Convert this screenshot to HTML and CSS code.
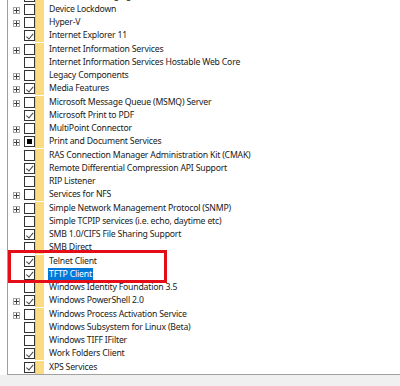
FILE: index.html
```html
<!DOCTYPE html>
<html lang="en">
   <head>
      <meta charset="UTF-8">
      <title>Windows Features</title>
      <link rel="stylesheet" href="styles.css">
   </head>
   <body>
      <div class="tree">
         <div class="list">
            <div class="row"><span class="exp blank"></span><span class="box"></span><span class="folder"></span><span class="label">Data Center Bridging</span></div>
            <div class="row"><span class="exp"></span><span class="box"></span><span class="folder"></span><span class="label">Device Lockdown</span></div>
            <div class="row"><span class="exp"></span><span class="box"></span><span class="folder"></span><span class="label">Hyper-V</span></div>
            <div class="row"><span class="exp blank"></span><span class="box on"></span><span class="folder"></span><span class="label">Internet Explorer 11</span></div>
            <div class="row"><span class="exp"></span><span class="box"></span><span class="folder"></span><span class="label">Internet Information Services</span></div>
            <div class="row"><span class="exp blank"></span><span class="box"></span><span class="folder"></span><span class="label">Internet Information Services Hostable Web Core</span></div>
            <div class="row"><span class="exp"></span><span class="box"></span><span class="folder"></span><span class="label">Legacy Components</span></div>
            <div class="row"><span class="exp"></span><span class="box on"></span><span class="folder"></span><span class="label">Media Features</span></div>
            <div class="row"><span class="exp"></span><span class="box"></span><span class="folder"></span><span class="label">Microsoft Message Queue (MSMQ) Server</span></div>
            <div class="row"><span class="exp blank"></span><span class="box on"></span><span class="folder"></span><span class="label">Microsoft Print to PDF</span></div>
            <div class="row"><span class="exp"></span><span class="box"></span><span class="folder"></span><span class="label">MultiPoint Connector</span></div>
            <div class="row"><span class="exp"></span><span class="box mixed"></span><span class="folder"></span><span class="label">Print and Document Services</span></div>
            <div class="row"><span class="exp blank"></span><span class="box"></span><span class="folder"></span><span class="label">RAS Connection Manager Administration Kit (CMAK)</span></div>
            <div class="row"><span class="exp blank"></span><span class="box on"></span><span class="folder"></span><span class="label">Remote Differential Compression API Support</span></div>
            <div class="row"><span class="exp blank"></span><span class="box"></span><span class="folder"></span><span class="label">RIP Listener</span></div>
            <div class="row"><span class="exp"></span><span class="box"></span><span class="folder"></span><span class="label">Services for NFS</span></div>
            <div class="row"><span class="exp"></span><span class="box"></span><span class="folder"></span><span class="label">Simple Network Management Protocol (SNMP)</span></div>
            <div class="row"><span class="exp blank"></span><span class="box"></span><span class="folder"></span><span class="label">Simple TCPIP services (i.e. echo, daytime etc)</span></div>
            <div class="row"><span class="exp blank"></span><span class="box on"></span><span class="folder"></span><span class="label">SMB 1.0/CIFS File Sharing Support</span></div>
            <div class="row"><span class="exp blank"></span><span class="box"></span><span class="folder"></span><span class="label">SMB Direct</span></div>
            <div class="row"><span class="exp blank"></span><span class="box on"></span><span class="folder"></span><span class="label">Telnet Client</span></div>
            <div class="row"><span class="exp blank"></span><span class="box on"></span><span class="folder"></span><span class="label selected">TFTP Client</span></div>
            <div class="row"><span class="exp blank"></span><span class="box"></span><span class="folder"></span><span class="label">Windows Identity Foundation 3.5</span></div>
            <div class="row"><span class="exp"></span><span class="box on"></span><span class="folder"></span><span class="label">Windows PowerShell 2.0</span></div>
            <div class="row"><span class="exp"></span><span class="box"></span><span class="folder"></span><span class="label">Windows Process Activation Service</span></div>
            <div class="row"><span class="exp blank"></span><span class="box"></span><span class="folder"></span><span class="label">Windows Subsystem for Linux (Beta)</span></div>
            <div class="row"><span class="exp blank"></span><span class="box"></span><span class="folder"></span><span class="label">Windows TIFF IFilter</span></div>
            <div class="row"><span class="exp blank"></span><span class="box on"></span><span class="folder"></span><span class="label">Work Folders Client</span></div>
            <div class="row"><span class="exp blank"></span><span class="box on"></span><span class="folder"></span><span class="label">XPS Services</span></div>
         </div>
      </div>
      <div class="footer"></div>
      <div class="callout"></div>
   </body>
</html>
```

FILE: styles.css
```css
html, body {
margin: 0;
padding: 0;
}
body {
width: 400px;
height: 386px;
overflow: hidden;
position: relative;
background-color: #fff;
font-family: "Noto Sans", "Open Sans", Arial, sans-serif;
font-size: 8.7px;
letter-spacing: -0.2px;
color: #1a1a1a;
}
.tree {
margin-left: 7px;
height: 374px;
background-color: #fff;
border-left: 1px solid #a0a0a0;
border-bottom: 1px solid #a0a0a0;
overflow: hidden;
}
.footer {
height: 11px;
background-color: #f0f0f0;
}
.list {
margin-top: -10.4px;
}
.row {
height: 13.26px;
display: flex;
align-items: center;
padding-left: 5px;
white-space: nowrap;
}
.exp {
position: relative;
width: 5px;
height: 5px;
border: 1px solid #a6a6a6;
margin-right: 4px;
margin-top: 2px;
flex: none;
}
.exp::before, .exp::after {
content: "";
position: absolute;
background-color: #404040;
}
.exp::before {
left: 0;
top: 2px;
width: 5px;
height: 1px;
}
.exp::after {
left: 2px;
top: 0;
width: 1px;
height: 5px;
}
.exp.blank {
visibility: hidden;
}
.box {
position: relative;
width: 9px;
height: 9px;
border: 1px solid #333;
background-color: #fff;
flex: none;
}
.box.on::after {
content: "";
position: absolute;
left: 3px;
top: 0.5px;
width: 2.5px;
height: 5.5px;
border-right: 1px solid #444;
border-bottom: 1px solid #444;
transform: rotate(40deg);
}
.box.mixed::after {
content: "";
position: absolute;
left: 2px;
top: 2px;
width: 5px;
height: 5px;
background-color: #000;
}
.folder {
width: 9px;
height: 13px;
background-color: #fcdc82;
border-left: 1px solid #f0c95e;
box-sizing: border-box;
margin-right: 5px;
flex: none;
}
.label {
line-height: 12px;
margin-top: -1px;
}
.selected {
background-color: #0078d7;
color: #fff;
padding: 0 1px;
margin-left: -1px;
}
.callout {
position: absolute;
left: 8px;
top: 250px;
width: 153px;
height: 27px;
border: 3px solid #e50d17;
}
```
